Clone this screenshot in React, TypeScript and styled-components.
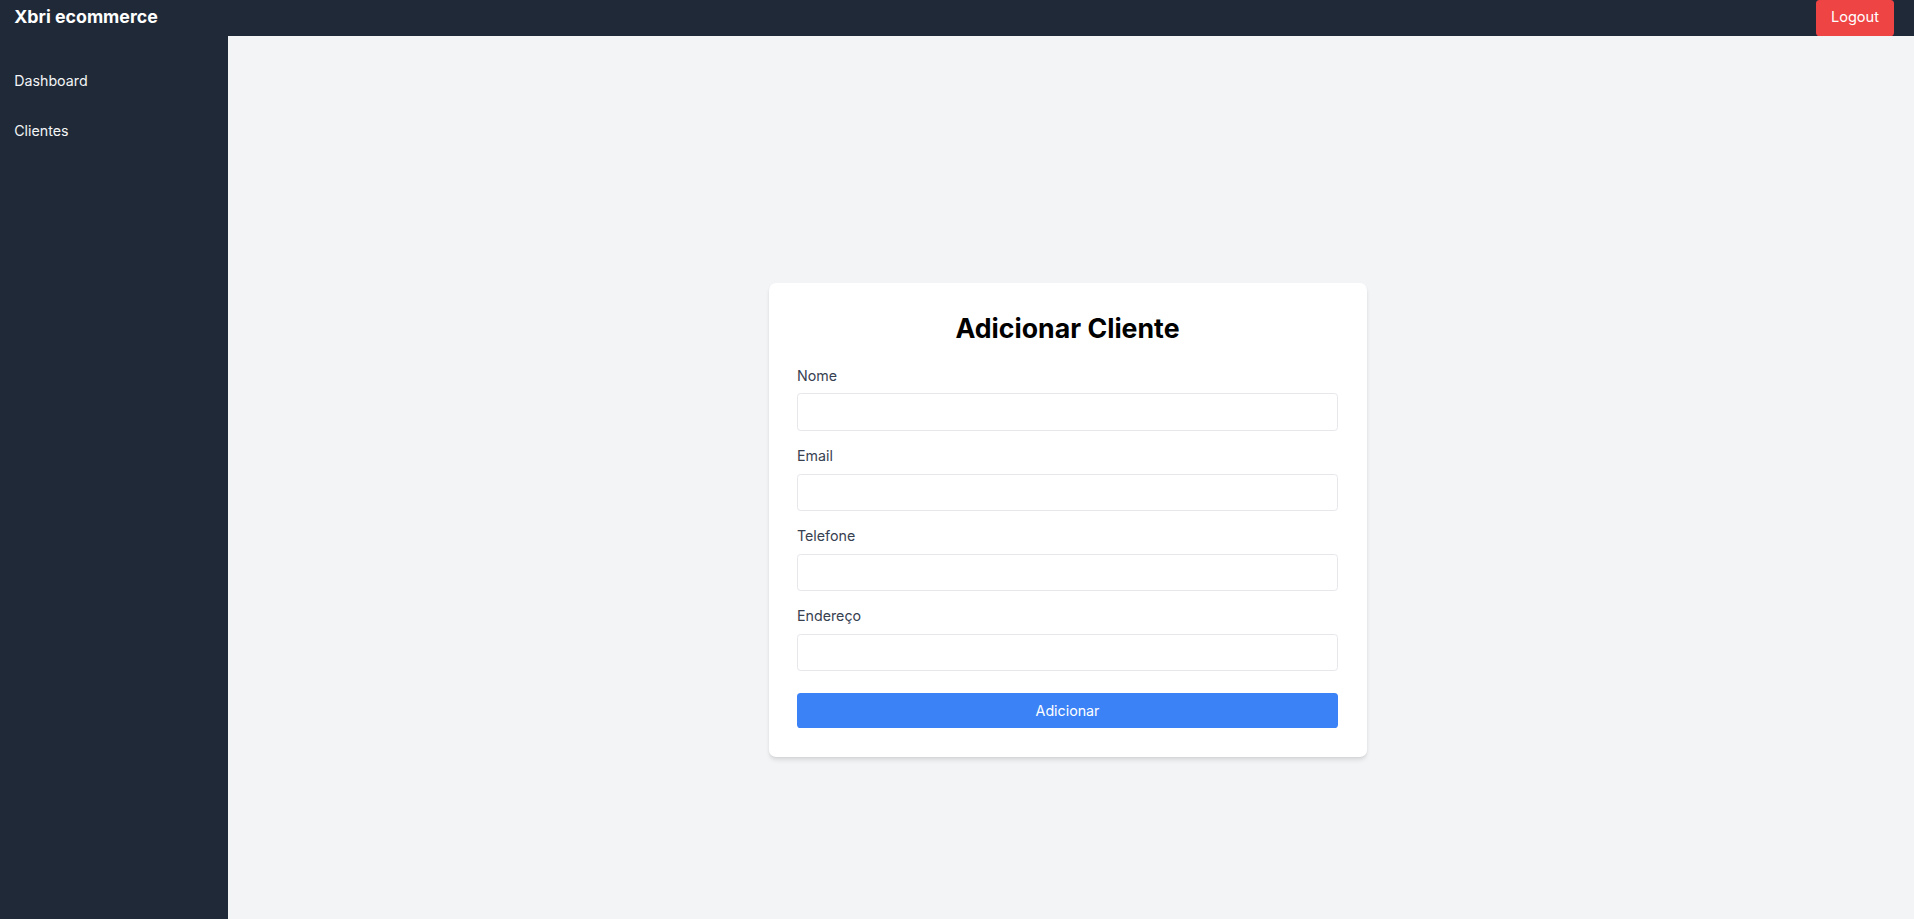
import React from 'react'
import styled, { createGlobalStyle } from 'styled-components'

const GlobalStyle = createGlobalStyle`
  html {
    overflow-y: scroll;
  }
  html::-webkit-scrollbar {
    width: 6px;
  }
  html::-webkit-scrollbar-track {
    background: #f1f1f1;
  }
  html::-webkit-scrollbar-thumb {
    background: #c1c1c1;
  }
  body {
    margin: 0;
    font-family: Inter, "Liberation Sans", sans-serif;
    background: #f3f4f6;
  }
  * {
    box-sizing: border-box;
  }
`

const Header = styled.header`
  display: flex;
  align-items: center;
  justify-content: space-between;
  height: 36px;
  padding: 0 20px 0 14.2px;
  background: #1f2937;
  color: #fff;
`

const Brand = styled.h1`
  margin: 0;
  font-size: 17.8px;
  line-height: 24.9px;
  font-weight: 700;
  margin-top: -2px;
`

const LogoutButton = styled.button`
  height: 35.6px;
  padding: 0 15px;
  border: none;
  border-radius: 3.6px;
  background: #ef4444;
  color: #fff;
  font-family: inherit;
  font-size: 14.6px;
  line-height: 21.4px;
  cursor: pointer;
`

const Layout = styled.div`
  display: flex;
`

const Sidebar = styled.nav`
  width: 228px;
  flex-shrink: 0;
  background: #1f2937;
  padding-top: 20.3px;
`

const NavLink = styled.a`
  display: block;
  padding: 14.2px;
  color: #f3f4f6;
  font-size: 14.24px;
  line-height: 21.4px;
  text-decoration: none;
`

const Main = styled.main`
  flex: 1;
  min-height: 968px;
  display: flex;
  align-items: center;
  justify-content: center;
  padding-right: 7px;
  background: #f3f4f6;
`

const Card = styled.form`
  width: 598px;
  padding: 28.5px;
  background: #fff;
  border-radius: 7.1px;
  box-shadow: 0 3.6px 5.3px -1px rgba(0, 0, 0, 0.1),
    0 1.8px 3.6px -1.8px rgba(0, 0, 0, 0.1);
`

const Title = styled.h2`
  margin: 0 0 21.4px;
  text-align: center;
  font-size: 26.7px;
  line-height: 32px;
  font-weight: 700;
  color: #000;
`

const Field = styled.div<{ $last?: boolean }>`
  margin-bottom: ${(p) => (p.$last ? '22.3px' : '14.2px')};
`

const Label = styled.label`
  display: block;
  margin-bottom: 7.1px;
  font-size: 14.24px;
  line-height: 21.4px;
  color: #374151;
`

const Input = styled.input`
  display: block;
  width: 100%;
  height: 37.4px;
  padding: 0 10.7px;
  border: 1px solid #e5e7eb;
  border-radius: 3.6px;
  font-family: inherit;
  font-size: 14.24px;
  background: #fff;
  outline: none;
`

const SubmitButton = styled.button`
  display: block;
  width: 100%;
  height: 35px;
  border: none;
  border-radius: 3.6px;
  background: #3b82f6;
  color: #fff;
  font-family: inherit;
  font-size: 14.24px;
  line-height: 21.4px;
  cursor: pointer;
`

const fields = [
  { label: 'Nome', name: 'nome', type: 'text' },
  { label: 'Email', name: 'email', type: 'email' },
  { label: 'Telefone', name: 'telefone', type: 'tel' },
  { label: 'Endereço', name: 'endereco', type: 'text' },
]

const App: React.FC = () => {
  return (
    <>
      <GlobalStyle />
      <Header>
        <Brand>Xbri ecommerce</Brand>
        <LogoutButton type="button">Logout</LogoutButton>
      </Header>
      <Layout>
        <Sidebar>
          <NavLink href="#">Dashboard</NavLink>
          <NavLink href="#">Clientes</NavLink>
        </Sidebar>
        <Main>
          <Card onSubmit={(e) => e.preventDefault()}>
            <Title>Adicionar Cliente</Title>
            {fields.map((field, i) => (
              <Field key={field.name} $last={i === fields.length - 1}>
                <Label htmlFor={field.name}>{field.label}</Label>
                <Input id={field.name} name={field.name} type={field.type} />
              </Field>
            ))}
            <SubmitButton type="submit">Adicionar</SubmitButton>
          </Card>
        </Main>
      </Layout>
    </>
  )
}

export default App
